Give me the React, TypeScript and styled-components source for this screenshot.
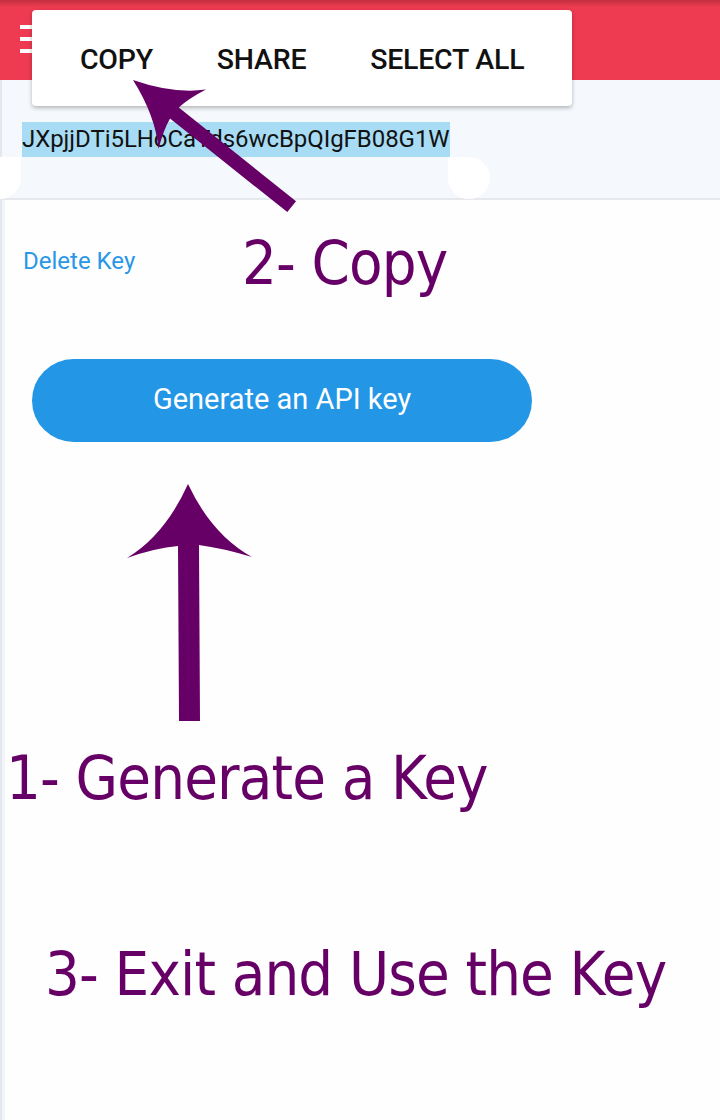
import React from "react";
import styled, { createGlobalStyle } from "styled-components";

const Global = createGlobalStyle`
  html, body { margin: 0; padding: 0; background: #fefefe; }
  #root { min-height: 1120px; }
  * { box-sizing: border-box; }
`;

const Page = styled.div`
  position: relative;
  width: 720px;
  height: 1120px;
  overflow: hidden;
  background: #fefefe;
  font-family: Roboto, "Liberation Sans", sans-serif;
  display: flex;
  flex-direction: column;
`;

const Header = styled.header`
  height: 80px;
  flex: none;
  background: linear-gradient(to bottom, #c22f40 0px, #ee3b51 7px, #ee3b51 100%);
  padding: 25px 0 0 20px;
`;

const Burger = styled.div`
  display: flex;
  flex-direction: column;
  gap: 8px;
  width: 18px;
`;

const BurgerBar = styled.span`
  display: block;
  height: 4px;
  background: #ffffff;
`;

const Body = styled.div`
  flex: 1;
  display: flex;
  flex-direction: column;
  border-left: 2px solid #e4e8ee;
  box-shadow: inset 3px 0 0 #f1f4f8;
`;

const KeyPanel = styled.div`
  height: 120px;
  flex: none;
  background: #f5f9fd;
  border-bottom: 2px solid #e6e8ec;
  padding: 42px 0 0 20px;
`;

const KeyText = styled.span`
  display: inline-block;
  background: #a8dcf4;
  color: #111;
  font-size: 24px;
  line-height: 35px;
  height: 35px;
  letter-spacing: -0.05px;
`;

const Content = styled.div`
  padding: 47px 0 0 21px;
  display: flex;
  flex-direction: column;
  align-items: flex-start;
`;

const DeleteLink = styled.a`
  color: #2a97e6;
  font-size: 24px;
  line-height: 28px;
  text-decoration: none;
`;

const PrimaryButton = styled.button`
  margin: 84px 0 0 9px;
  width: 500px;
  height: 83px;
  border: none;
  border-radius: 42px;
  background: #2397e6;
  color: #ffffff;
  font-family: Roboto, "Liberation Sans", sans-serif;
  font-size: 29px;
  padding: 0 0 4px 0;
`;

const Popup = styled.div`
  position: absolute;
  left: 32px;
  top: 10px;
  width: 540px;
  height: 96px;
  background: #ffffff;
  border-radius: 4px;
  box-shadow: 0 2px 4px rgba(0, 0, 0, 0.28);
  display: flex;
  align-items: center;
  gap: 64px;
  padding: 2px 0 0 48px;
`;

const PopupItem = styled.span`
  font-family: Roboto, "Liberation Sans", sans-serif;
  font-weight: 500;
  font-size: 28.5px;
  color: #111;
  letter-spacing: -0.25px;
`;

const Handle = styled.div<{ $side: "left" | "right" }>`
  position: absolute;
  top: 157px;
  left: ${(p) => (p.$side === "left" ? "-21px" : "448px")};
  width: 42px;
  height: 42px;
  background: #ffffff;
  border-radius: ${(p) => (p.$side === "left" ? "50% 0 50% 50%" : "0 50% 50% 50%")};
`;

const Note = styled.div<{ $x: number; $y: number }>`
  position: absolute;
  left: ${(p) => p.$x}px;
  top: ${(p) => p.$y}px;
  font-family: "DejaVu Sans Condensed", "DejaVu Sans", sans-serif;
  font-size: 61px;
  letter-spacing: -0.85px;
  line-height: 1;
  color: #660066;
  white-space: nowrap;
`;

const ArrowLayer = styled.svg`
  position: absolute;
  left: 0;
  top: 0;
  pointer-events: none;
`;

export default function App() {
  return (
    <>
      <Global />
      <Page>
        <Header>
          <Burger>
            <BurgerBar />
            <BurgerBar />
            <BurgerBar />
          </Burger>
        </Header>
        <Body>
          <KeyPanel>
            <KeyText>JXpjjDTi5LHoCaTds6wcBpQIgFB08G1W</KeyText>
          </KeyPanel>
          <Content>
            <DeleteLink>Delete Key</DeleteLink>
            <PrimaryButton>Generate an API key</PrimaryButton>
          </Content>
        </Body>

        <Handle $side="left" />
        <Handle $side="right" />

        <Popup>
          <PopupItem>COPY</PopupItem>
          <PopupItem>SHARE</PopupItem>
          <PopupItem>SELECT ALL</PopupItem>
        </Popup>

        <Note $x={242} $y={232}>2- Copy</Note>
        <Note $x={6} $y={747}>1- Generate a Key</Note>
        <Note $x={45} $y={943}>3- Exit and Use the Key</Note>

        <ArrowLayer width="720" height="1120" viewBox="0 0 720 1120">
          <path
            fill="#660066"
            d="M188,484 Q165,535 127,558 Q155,548 178,546 L179,721 L200,721 L199,545 Q222,548 252,557 Q212,535 188,484 Z"
          />
          <path
            fill="#660066"
            transform="translate(133,80) rotate(-51.4)"
            d="M0,0 Q-14,40 -38,63 Q-20,55 -7,53 L-7,203 L7,203 L7,53 Q20,55 38,63 Q14,40 0,0 Z"
          />
        </ArrowLayer>
      </Page>
    </>
  );
}
